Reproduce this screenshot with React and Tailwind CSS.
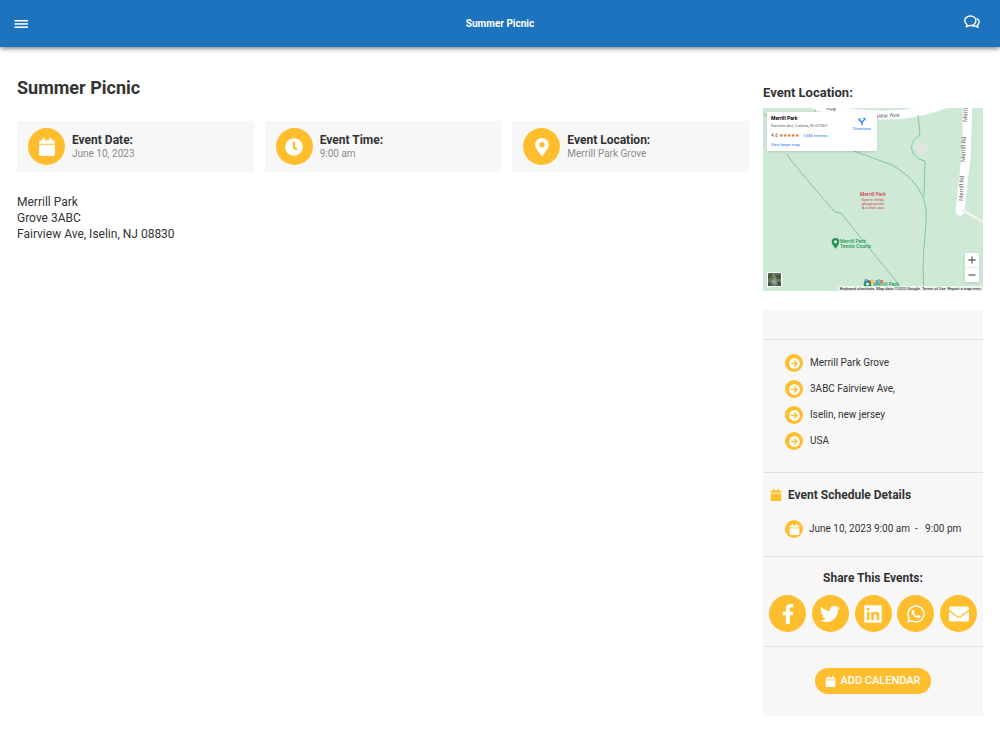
import React from "react";
import {
  FaCalendar,
  FaClock,
  FaMapMarkerAlt,
  FaArrowCircleRight,
  FaFacebookF,
  FaTwitter,
  FaLinkedin,
  FaWhatsapp,
  FaEnvelope,
} from "react-icons/fa";

const facts = [
  { label: "Event Date:", value: "June 10, 2023", Icon: FaCalendar },
  { label: "Event Time:", value: "9:00 am", Icon: FaClock },
  { label: "Event Location:", value: "Merrill Park Grove", Icon: FaMapMarkerAlt },
];

const address = ["Merrill Park Grove", "3ABC Fairview Ave,", "Iselin, new jersey", "USA"];

const shares = [
  { name: "Facebook", Icon: FaFacebookF },
  { name: "Twitter", Icon: FaTwitter },
  { name: "LinkedIn", Icon: FaLinkedin },
  { name: "WhatsApp", Icon: FaWhatsapp },
  { name: "Email", Icon: FaEnvelope },
];

function Header() {
  return (
    <header className="relative grid h-[47px] grid-cols-3 items-center bg-[#1e73be] px-3.5 text-white shadow-[0_1px_5px_rgba(0,0,0,0.6)]">
      <button type="button" aria-label="Menu" className="justify-self-start">
        <svg viewBox="0 0 14 10" className="h-2.5 w-3.5" fill="currentColor" aria-hidden="true">
          <rect x="0.500" y="1" width="13.500" height="1.500" />
          <rect x="0.500" y="4.200" width="13.500" height="1.500" />
          <rect x="0.500" y="7.400" width="13.500" height="1.500" />
        </svg>
      </button>
      <div className="text-center text-[10px] leading-4 font-bold">Summer Picnic</div>
      <button type="button" aria-label="Messages" className="mr-1.5 mb-1 justify-self-end">
        <svg viewBox="0 0 16 14" className="h-3.5 w-4" fill="none" stroke="currentColor" strokeWidth="1.400" strokeLinejoin="round" aria-hidden="true">
          <path d="M6.3 1C3.2 1 .8 3.1.8 5.8c0 1.600.8 3 2.200 3.900-.1.900-.4 1.500-.9 2.100 1.200-.1 2.100-.5 2.900-1.300 3.800.6 6.900-1.600 6.900-4.700C11.900 3.100 9.500 1 6.300 1Z" />
          <path d="M12.700 3.300c1.500.7 2.500 2 2.500 3.500 0 1.400-.8 2.600-1.900 3.300.1.900.4 1.500.8 2.100-1.200-.1-2-.5-2.700-1.300-1.300.2-2.400 0-3.400-.4" />
        </svg>
      </button>
    </header>
  );
}

function LocationMap() {
  return (
    <div className="relative h-[183px] overflow-hidden bg-[#ceead6]">
      <svg viewBox="0 0 220 183" preserveAspectRatio="xMidYMid slice" className="block size-full font-[Roboto,sans-serif]" role="img" aria-label="Map of Merrill Park">
        <path d="M51 -3Q75 6 120 7Q150 8 182 -4" fill="none" stroke="#fff" strokeWidth="9" />
        <path d="M205 -4 203 50 197 103" fill="none" stroke="#fff" strokeWidth="9" strokeLinecap="round" />
        <path d="M199 102 220 114" fill="none" stroke="#f1f3f4" strokeWidth="2.500" />
        <g fill="none" stroke="#81c995" strokeWidth="1">
          <path d="M0 5 4 8M52 1 52 5M24 46 Q25 50 71 103 Q74 105 78 105L90 120 137 178" />
          <path d="M91 43 129 57C148 68 162 84 163 103C164 123 158 145 161 183" />
          <path d="M155 7 157 27C149 31 147 39 150 45Q153 51 162 53L161 89" />
        </g>
        <path d="m151 38 8-5 7 8-9 7Z" fill="#e0e5e2" />
        <g fill="#5f6368" fontSize="6">
          <text transform="rotate(8 63 2)" x="63" y="2">Ave</text>
          <text transform="rotate(-3 114 10)" x="113" y="10">view Ave</text>
          <text transform="translate(204 14) rotate(-88)">Merrill Rd</text>
          <text transform="translate(202 54) rotate(-88)">Merrill Rd</text>
          <text transform="translate(200 93) rotate(-88)">Merrill Rd</text>
        </g>
        <g fill="#d93a4a" textAnchor="middle">
          <text x="110" y="88" fontSize="5" fontWeight="500">Merrill Park</text>
          <text x="110" y="93" fontSize="4">Sports fields,</text>
          <text x="110" y="97" fontSize="4">playgrounds</text>
          <text x="110" y="101" fontSize="4">&amp; a mini zoo</text>
        </g>
        <path d="M72.500 130a3.800 3.800 0 0 0-3.800 3.800c0 3 3.800 7 3.800 7s3.800-4 3.800-7a3.800 3.800 0 0 0-3.800-3.800Z" fill="#249653" />
        <circle cx="72.500" cy="133.800" r="1.500" fill="#fff" />
        <g fill="#249653" fontSize="5" fontWeight="500">
          <text x="77" y="135">Merrill Park</text>
          <text x="77" y="140">Tennis Courts</text>
          <circle cx="104.500" cy="176" r="3.800" />
          <circle cx="104.500" cy="176" r="1.500" fill="#fff" />
          <text x="110" y="178">Merrill Park</text>
        </g>
        <text x="101" y="175" fontSize="6" fontWeight="700">
          <tspan fill="#4285f4">G</tspan>
          <tspan fill="#ea4335">o</tspan>
          <tspan fill="#fbbc04">o</tspan>
          <tspan fill="#4285f4">g</tspan>
          <tspan fill="#34a853">l</tspan>
          <tspan fill="#ea4335">e</tspan>
        </text>
      </svg>

      <div className="absolute top-1 left-1 flex h-[39px] w-[110px] justify-between bg-white px-1 pt-[3px] text-[4px] leading-[7px] text-[#5b5b5b] shadow-sm">
        <div>
          <p className="text-[5px] leading-[7px] font-bold text-black">Merrill Park</p>
          <p className="leading-[8px]">Fairview Ave, Colonia, NJ 07067</p>
          <p className="flex items-center gap-px leading-[11px]">
            <span className="text-[5px]">4.6</span>
            <span className="text-[5px] text-[#e7711b]" aria-label="4.6 stars">★★★★★</span>
            <a href="#reviews" className="ml-[3px] text-[#1a73e8]">1,683 reviews</a>
          </p>
          <a href="#map" className="block text-[#1a73e8]">View larger map</a>
        </div>
        <a href="#directions" className="flex flex-col items-center pt-0.5 pr-0.5 text-[#1a73e8]">
          <svg viewBox="0 0 8 8" className="size-2" fill="none" stroke="currentColor" strokeWidth="1.200" aria-hidden="true">
            <path d="M4 8V5.500L1.500 3M4 5.500l2-2.500" />
            <path d="M4.800 1H7.300V4Z M.5 1.500h2.500L.5 4Z" fill="currentColor" stroke="none" />
          </svg>
          Directions
        </a>
      </div>

      <button type="button" aria-label="Satellite view" className="absolute bottom-1 left-1 border border-white">
        <svg viewBox="0 0 14 14" className="size-[13px]" aria-hidden="true">
          <path d="M0 0h14v14H0Z" fill="#66765a" />
          <path d="M0 2 5 0 3 5 0 6ZM8 3l5-2 1 4-4 2Z" fill="#48583c" />
          <path d="m3 9 4-3 3 4-3 3Z" fill="#82a59c" />
          <path d="m0 10 3 1 1 3H0ZM10 8l4 1v5h-3Z" fill="#445340" />
          <path d="m5 1 3 6 6 2" fill="none" stroke="#a5a588" strokeWidth="0.800" />
        </svg>
      </button>

      <div className="absolute right-1 bottom-[9px] flex w-3.5 flex-col bg-white text-[#666] shadow-sm">
        <button type="button" aria-label="Zoom in" className="flex h-[15px] items-center justify-center border-b border-[#e6e6e6]">
          <svg viewBox="0 0 8 8" className="size-2" stroke="currentColor" strokeWidth="1.300" aria-hidden="true">
            <path d="M.5 4h7M4 .5v7" />
          </svg>
        </button>
        <button type="button" aria-label="Zoom out" className="flex h-3.5 items-center justify-center">
          <svg viewBox="0 0 8 8" className="size-2" stroke="currentColor" strokeWidth="1.300" aria-hidden="true">
            <path d="M.5 4h7" />
          </svg>
        </button>
      </div>

      <div className="absolute right-0 bottom-0 flex gap-0.5 bg-[#f5f5f5]/80 px-0.5 text-[4px] leading-[5px] whitespace-nowrap text-black">
        <button type="button">Keyboard shortcuts</button>
        <span>Map data ©2023 Google</span>
        <a href="#terms">Terms of Use</a>
        <a href="#report">Report a map error</a>
      </div>
    </div>
  );
}

function Sidebar() {
  return (
    <aside className="w-[220px] shrink-0 pt-[9px]">
      <h2 className="mb-1.5 text-[13px] leading-[18px] font-bold">Event Location:</h2>
      <LocationMap />

      <div className="mt-[19px] divide-y divide-[#e2e2e2] bg-[#f7f7f7]">
        <div className="h-[30px]" />
        <ul className="flex flex-col gap-2 pt-3.5 pb-[22px] pl-[22px] text-[10px]">
          {address.map((line) => (
            <li key={line} className="flex items-center gap-[7px] leading-[18px]">
              <span className="flex size-[18px] items-center justify-center rounded-full bg-[#ffbe2e] text-white">
                <FaArrowCircleRight className="size-[11px]" />
              </span>
              {line}
            </li>
          ))}
        </ul>
        <section className="pt-3 pb-[18px]">
          <h3 className="flex items-center gap-1.5 pl-[7px] text-[12px] leading-5 font-bold">
            <FaCalendar className="size-3 text-[#ffbe2e]" />
            Event Schedule Details
          </h3>
          <p className="mt-[15px] flex items-center gap-1.5 pl-[22px] text-[10px] leading-[18px] whitespace-pre">
            <span className="flex size-[18px] items-center justify-center rounded-full bg-[#ffbe2e] text-white">
              <FaCalendar className="size-[11px]" />
            </span>
            {"June 10, 2023 9:00 am  -   9:00 pm"}
          </p>
        </section>
        <section className="pt-[11px] pb-3.5">
          <h3 className="text-center text-[12px] leading-5 font-bold">Share This Events:</h3>
          <div className="mt-[7px] flex justify-between px-1.5">
            {shares.map(({ name, Icon }) => (
              <a key={name} href={`#${name.toLowerCase()}`} aria-label={name} className="flex size-[37px] items-center justify-center rounded-full bg-[#ffbe2e] text-white">
                <Icon className="size-5" />
              </a>
            ))}
          </div>
        </section>
        <div className="flex justify-center pt-[21px] pb-[22px]">
          <button type="button" className="flex h-[26px] items-center gap-1 rounded-full bg-[#ffbe2e] px-2.5 text-[11px] font-medium text-white">
            <FaCalendar className="size-[11px]" />
            ADD CALENDAR
          </button>
        </div>
      </div>
    </aside>
  );
}

export default function App() {
  return (
    <div className="min-h-screen bg-white font-[Roboto,sans-serif] text-[#333]">
      <Header />
      <div className="flex items-start gap-3.5 px-[17px] pt-7">
        <main className="min-w-0 flex-1">
          <h1 className="text-lg leading-[26px] font-bold">Summer Picnic</h1>
          <div className="mt-5 grid grid-cols-3 gap-[11px]">
            {facts.map(({ label, value, Icon }) => (
              <section key={label} className="flex h-[51px] items-center gap-[7px] bg-[#f7f7f7] px-[11px]">
                <span className="flex size-[37px] shrink-0 items-center justify-center rounded-full bg-[#ffbe2e] text-white">
                  <Icon className="size-[18px]" />
                </span>
                <div>
                  <h2 className="text-[12px] leading-[13px] font-bold">{label}</h2>
                  <p className="text-[10px] leading-[13px] text-[#8c8c8c]">{value}</p>
                </div>
              </section>
            ))}
          </div>
          <address className="mt-[22px] text-[12px] leading-4 not-italic">
            Merrill Park
            <br />
            Grove 3ABC
            <br />
            Fairview Ave, Iselin, NJ 08830
          </address>
        </main>
        <Sidebar />
      </div>
    </div>
  );
}
